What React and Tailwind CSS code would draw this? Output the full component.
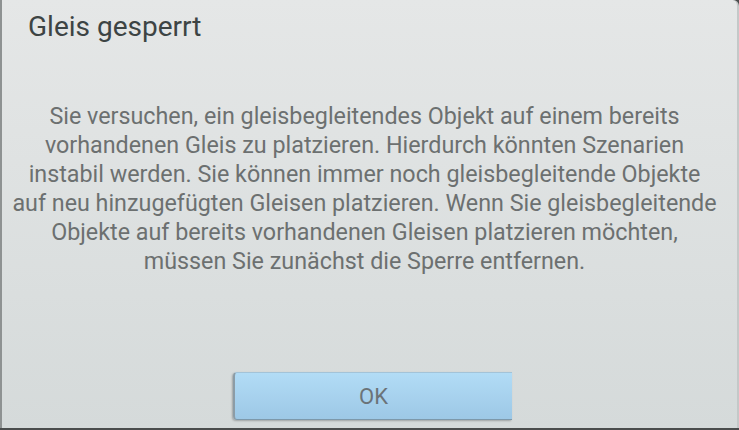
export default function App() {
  const lines = [
    'Sie versuchen, ein gleisbegleitendes Objekt auf einem bereits',
    'vorhandenen Gleis zu platzieren. Hierdurch könnten Szenarien',
    'instabil werden. Sie können immer noch gleisbegleitende Objekte',
    'auf neu hinzugefügten Gleisen platzieren. Wenn Sie gleisbegleitende',
    'Objekte auf bereits vorhandenen Gleisen platzieren möchten,',
    'müssen Sie zunächst die Sperre entfernen.',
  ];

  return (
    <div className="h-[430px] w-[739px] overflow-hidden bg-[#4a4d4d]" style={{ fontFamily: 'Roboto, "Open Sans", sans-serif' }}>
      <div className="flex h-[428px] w-[739px] flex-col rounded-tr-[6px] border-l-2 border-r-2 border-l-[#8e9292] border-r-[#c4c8c8] bg-gradient-to-b from-[#e5e7e7] to-[#d5dada]">
        <h1 className="pl-[26px] pt-[10px] text-[28px] font-normal leading-[34px] text-[#3d4444]">Gleis gesperrt</h1>

        <div className="mt-[58px] pr-[10px] text-center text-[23.3px] leading-[29px] text-[#6c7070]">
          {lines.map(l => (
            <p key={l} className="whitespace-nowrap">{l}</p>
          ))}
        </div>

        <div className="mt-auto mb-[8px] flex pl-[231px]">
          <button className="flex h-[48px] w-[279px] items-center justify-center rounded-l-[4px] border-l-2 border-b border-t border-l-[#8c9ca6] border-b-[#7d98aa] border-t-[#a3c3d8] bg-gradient-to-b from-[#b2dcf6] to-[#9dc8e6] text-[22px] text-[#6b7378] shadow-[-1px_1px_2px_rgba(0,0,0,0.25)]">
            OK
          </button>
        </div>
      </div>
    </div>
  );
}
